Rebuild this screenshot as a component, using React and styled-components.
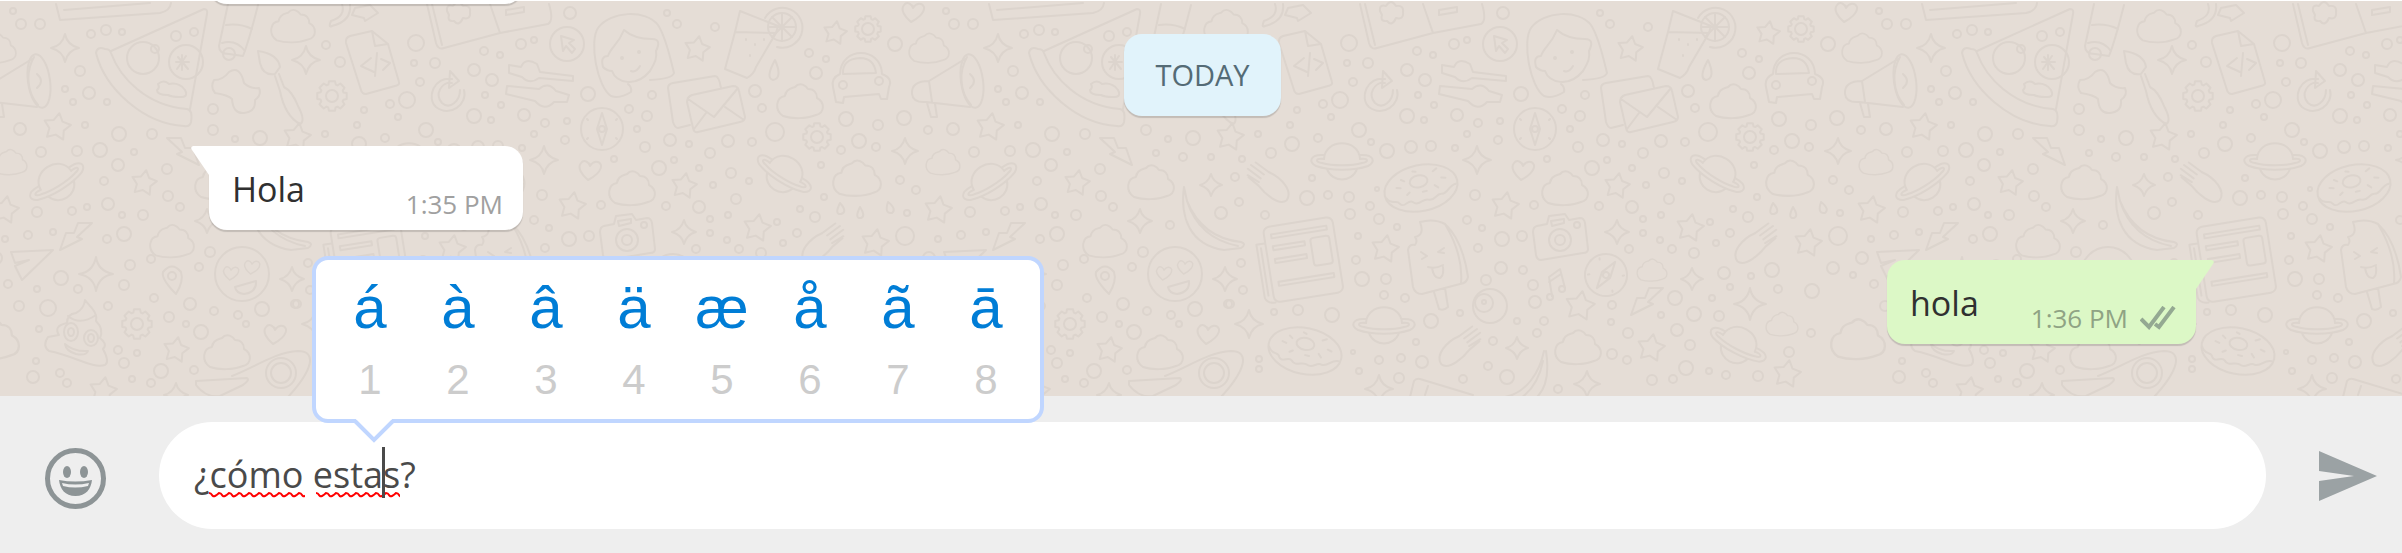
import React, { useState } from 'react';
import styled, { createGlobalStyle } from 'styled-components';

const GlobalStyle = createGlobalStyle`
  *, *::before, *::after { box-sizing: border-box; }
  body { margin: 0; background: #eee; font-family: "Open Sans", "Noto Sans", sans-serif; }
`;

const Page = styled.div`
  display: flex;
  flex-direction: column;
  min-height: 100vh;
`;

const Conversation = styled.main`
  position: relative;
  flex: 1;
  display: flex;
  flex-direction: column;
  padding: 0 206px 51px 209px;
  border-top: 1px solid #fff;
  background: #e5ddd6;
  overflow: hidden;
`;

const Wallpaper = styled.svg`
  position: absolute;
  inset: 0;
  width: 100%;
  height: 100%;
  fill: none;
  stroke: #dcd4cd;
  stroke-width: 2;
  stroke-linejoin: round;
  stroke-linecap: round;
`;

const Bubble = styled.article`
  position: relative;
  display: flex;
  justify-content: space-between;
  align-self: ${(p) => (p.$sent ? 'flex-end' : 'flex-start')};
  min-width: ${(p) => (p.$sent ? 309 : 314)}px;
  height: 84px;
  margin-top: 30px;
  padding: 0 20px 0 23px;
  border-radius: 18px;
  background: ${(p) => (p.$sent ? '#dcf8c6' : '#fff')};
  box-shadow: 0 2px 1px rgba(0, 0, 0, 0.15);
  ${(p) => (p.$sent ? 'border-top-right-radius: 0;' : 'border-top-left-radius: 0;')}
`;

const ScrolledBubble = styled(Bubble)`
  margin-top: -81px;
`;

const Tail = styled.svg`
  position: absolute;
  top: 0;
  width: 20px;
  height: 30px;
  fill: ${(p) => (p.$sent ? '#dcf8c6' : '#fff')};
  ${(p) => (p.$sent ? 'left: calc(100% - 1px);' : 'right: calc(100% - 1px);')}
`;

const MessageText = styled.p`
  margin: 0;
  padding-top: 20px;
  font-size: 34px;
  line-height: 46px;
  color: #303030;
`;

const Meta = styled.div`
  display: flex;
  align-items: center;
  gap: 12px;
  height: 76px;
  padding-top: 40px;
  font-size: 26px;
  line-height: 36px;
  color: ${(p) => (p.$sent ? '#8fa384' : '#a0a0a0')};
`;

const DateChip = styled.time`
  position: relative;
  align-self: center;
  display: flex;
  align-items: center;
  height: 82px;
  margin-top: 30px;
  padding: 0 31px 2px;
  border-radius: 18px;
  background: #e1f3fb;
  box-shadow: 0 2px 1px rgba(0, 0, 0, 0.15);
  color: #546b76;
  font-size: 29px;
`;

const Composer = styled.form`
  position: relative;
  display: flex;
  align-items: center;
  gap: 53px;
  padding: 26px 25px 24px 45px;
  background: #eee;
`;

const IconButton = styled.button`
  display: flex;
  padding: 0;
  border: 0;
  background: none;
  color: ${(p) => p.$color};
  cursor: pointer;
`;

const EmojiButton = styled(IconButton)`
  padding-top: 6px;
`;

const Field = styled.div`
  position: relative;
  flex: 1;
`;

const MessageInput = styled.input`
  display: block;
  width: 100%;
  height: 107px;
  padding: 0 36px 2px 35px;
  border: 0;
  border-radius: 54px;
  background: #fff;
  color: #4a4a4a;
  font: 36px "Open Sans", "Noto Sans", sans-serif;
  outline: none;
`;

const Caret = styled.span`
  position: absolute;
  left: 223px;
  top: 25px;
  width: 3px;
  height: 51px;
  background: #4a4a4a;
`;

const Squiggle = styled.svg`
  position: absolute;
  left: ${(p) => p.$left}px;
  top: 69px;
  width: ${(p) => p.$width}px;
  height: 7px;
  fill: none;
  stroke: #f00;
  stroke-width: 2;
`;

const AccentPopup = styled.div`
  position: absolute;
  left: 312px;
  bottom: 130px;
  display: flex;
  height: 167px;
  padding: 0 10px;
  border: 4px solid #c0d6ff;
  border-radius: 16px;
  background: #fff;
  font-family: "Liberation Sans", Arial, sans-serif;
`;

const AccentKey = styled.button`
  display: flex;
  flex-direction: column;
  align-items: center;
  width: 88px;
  padding: 14px 0 0;
  border: 0;
  background: none;
  font-family: inherit;
  cursor: pointer;
`;

const AccentLetter = styled.span`
  color: #007dd6;
  font-size: 60px;
  line-height: 68px;
`;

const AccentNumber = styled.span`
  color: #ccc;
  font-size: 42px;
  line-height: 76px;
`;

const Pointer = styled.svg`
  position: absolute;
  left: 36px;
  top: 158px;
  width: 44px;
  height: 25px;
`;

/* Wallpaper: one 933px wide run of doodles, repeated along the window. */
const TILE = 933;

const DOTS = [
  [13, 10, 3], [21, 23, 5], [40, 23, 5], [91, 33, 4], [106, 29, 5], [122, 31, 3], [176, 35, 5], [194, 31, 4],
  [80, 70, 5], [65, 88, 3], [89, 92, 6], [73, 101, 3], [107, 101, 3], [20, 128, 6], [85, 124, 3], [119, 133, 7],
  [152, 133, 5], [213, 108, 5], [213, 129, 5], [235, 138, 3], [260, 137, 7], [41, 151, 5], [77, 150, 5],
  [100, 149, 7], [134, 151, 3], [118, 164, 6], [167, 168, 5], [104, 180, 4], [168, 195, 5], [108, 203, 6],
  [37, 211, 5], [72, 210, 4], [87, 206, 3], [122, 214, 3], [143, 214, 5], [180, 206, 4], [223, 152, 3],
  [250, 156, 4], [278, 156, 3], [309, 158, 3], [302, 176, 4], [306, 201, 4], [288, 212, 6], [237, 224, 4],
  [332, 214, 4], [5, 238, 3], [28, 234, 4], [53, 231, 3], [107, 238, 4], [124, 233, 7], [210, 251, 5],
  [326, 44, 4], [340, 61, 5], [416, 42, 8], [414, 62, 3], [435, 62, 5], [474, 69, 6], [420, 81, 4], [492, 79, 6],
  [407, 99, 8], [390, 103, 4], [364, 109, 3], [398, 116, 3], [485, 94, 3], [501, 104, 3], [474, 115, 7],
  [491, 119, 3], [524, 114, 6], [357, 124, 3], [426, 129, 7], [325, 133, 3], [359, 143, 7], [385, 137, 4],
  [338, 152, 5], [438, 141, 3], [454, 150, 7], [478, 146, 6], [498, 145, 5], [522, 147, 3], [379, 177, 3],
  [374, 197, 7], [395, 194, 4], [416, 196, 5], [444, 188, 2], [417, 213, 5], [437, 205, 4], [446, 218, 5],
  [464, 226, 3], [425, 235, 3], [423, 259, 4], [429, 278, 7], [453, 278, 5], [451, 294, 4], [472, 297, 4],
  [365, 309, 5], [341, 311, 3], [399, 314, 7], [310, 289, 4], [297, 303, 4], [420, 351, 2], [446, 359, 4],
  [326, 358, 3], [326, 368, 3], [426, 370, 3], [468, 357, 4], [489, 361, 6], [466, 377, 5], [570, 12, 6],
  [521, 43, 5], [534, 39, 3], [484, 50, 4], [500, 54, 3], [588, 93, 7], [545, 122, 4], [567, 120, 3],
  [534, 133, 3], [565, 139, 4], [677, 23, 4], [715, 26, 4], [667, 12, 3], [652, 94, 4], [629, 108, 4],
  [647, 115, 5], [637, 128, 3], [755, 90, 6], [762, 107, 4], [645, 146, 5], [670, 139, 6], [689, 143, 3],
  [710, 152, 5], [728, 140, 6], [752, 141, 4], [775, 131, 9], [809, 52, 4], [826, 58, 3], [816, 72, 6],
  [846, 118, 7], [859, 140, 7], [841, 149, 4], [614, 158, 3], [659, 167, 7], [674, 159, 3], [699, 167, 3],
  [731, 172, 5], [749, 180, 3], [713, 184, 3], [542, 194, 5], [601, 204, 4], [666, 205, 4], [699, 206, 6],
  [736, 198, 5], [728, 214, 3], [710, 218, 3], [710, 232, 3], [727, 239, 3], [739, 248, 4], [761, 252, 5],
  [696, 248, 4], [783, 242, 3], [797, 232, 4], [777, 221, 3], [800, 208, 3], [815, 216, 5], [824, 196, 3],
  [821, 164, 3], [534, 219, 4], [549, 227, 3], [569, 238, 7], [589, 235, 5], [545, 247, 4], [568, 267, 6],
  [590, 269, 4], [553, 279, 5], [600, 284, 5], [602, 301, 6], [498, 320, 7], [527, 312, 3], [483, 341, 3],
  [560, 340, 4], [584, 320, 3], [611, 320, 4], [604, 332, 4], [679, 304, 4], [678, 321, 3], [695, 332, 5],
  [744, 329, 6], [728, 314, 3], [742, 297, 7], [761, 313, 7], [786, 315, 5], [779, 297, 3], [791, 272, 6],
  [797, 286, 3], [818, 275, 3], [839, 269, 7], [845, 288, 4], [679, 353, 5], [694, 359, 4], [757, 344, 5],
  [753, 367, 7], [776, 370, 3], [740, 378, 4], [719, 379, 5], [793, 374, 4], [825, 375, 5], [856, 351, 5],
  [555, 365, 4], [574, 376, 7], [530, 378, 4], [625, 388, 4], [895, 43, 7], [904, 117, 7], [878, 124, 5],
  [928, 129, 4], [876, 146, 4], [900, 179, 4], [916, 189, 4], [907, 212, 3], [905, 235, 9], [929, 257, 6],
  [900, 267, 6], [920, 274, 3], [879, 290, 7], [8, 283, 4], [878, 332, 4], [61, 277, 7], [37, 288, 3],
  [78, 288, 4], [48, 307, 8], [19, 305, 5], [108, 305, 4], [130, 264, 5], [151, 258, 4], [124, 284, 5],
  [154, 297, 4], [169, 316, 5], [186, 323, 3], [190, 303, 6], [199, 266, 4], [214, 310, 4], [238, 314, 4],
  [246, 323, 3], [201, 331, 7], [262, 308, 7], [295, 303, 4], [39, 328, 3], [118, 349, 4], [137, 352, 3],
  [124, 362, 5], [33, 376, 6], [36, 360, 3], [60, 372, 4], [67, 382, 4], [132, 378, 3], [151, 382, 4],
  [161, 370, 7], [194, 369, 4], [308, 262, 4],
];

const STARS = [
  [57, 126, 14], [144, 182, 13], [5, 209, 14], [297, 136, 14], [452, 248, 14], [572, 205, 14], [697, 48, 13],
  [684, 185, 13], [757, 227, 14], [835, 32, 12], [647, 305, 15], [718, 347, 14], [854, 373, 14], [875, 242, 14],
  [176, 349, 13], [103, 390, 14],
];
const SPARKS = [
  [65, 47, 14], [306, 59, 14], [278, 184, 11], [207, 220, 12], [905, 150, 13], [544, 159, 14], [684, 231, 12],
  [292, 278, 12], [316, 323, 14], [759, 278, 11], [584, 347, 11], [817, 303, 16], [446, 388, 14], [654, 383, 13],
  [96, 273, 17], [176, 394, 12],
];
const CLOUDS = [
  [293, 25, 22], [218, 181, 23], [172, 240, 22], [-4, 47, 20], [10, 161, 17], [-8, 338, 27], [632, 187, 23],
  [800, 100, 23], [857, 177, 24], [719, 269, 15], [645, 346, 23], [849, 323, 16], [227, 351, 23],
];
const PLANETS = [[409, 160, 0], [451, 324, 0], [784, 173, 32], [805, 344, 28], [57, 181, -32]];
const GEARS = [[332, 95, 15], [817, 136, 14], [868, 28, 13], [137, 323, 15]];
const HEARTS = [[913, 11, 10], [590, 169, 11], [275, 333, 11]];
const BOLTS = [[184, 150, 20], [75, 235, -20], [713, 300, -20]];
const HANDS = [[336, 183, 40], [822, 244, -40], [526, 347, -40]];

const polar = (r, a) => `${(r * Math.cos(a)).toFixed(1)},${(r * Math.sin(a)).toFixed(1)}`;
const starPath = (r) =>
  'M' + Array.from({ length: 10 }, (_, i) => polar(i % 2 ? r * 0.55 : r, (i * Math.PI) / 5 - 1.4)).join('L') + 'Z';
const gearPath = (r) =>
  'M' +
  Array.from({ length: 8 }, (_, i) => {
    const a = (i * Math.PI) / 4;
    return [polar(r, a - 0.2), polar(r, a + 0.2), polar(r * 0.8, a + 0.32), polar(r * 0.8, a + 0.48)].join('L');
  }).join('L') +
  'Z';
const sparkPath = (r) => `M0,${-r}Q2,-3 ${r},0Q3,2 0,${r}Q-2,3 ${-r},0Q-3,-2 0,${-r}Z`;
const CLOUD = 'M-17,15C-26,9 -24,-4 -15,-5C-14,-13 -7,-13 -5,-14C0,-20 6,-15 8,-12C15,-12 17,-7 17,-3C25,1 25,12 16,14C6,18 -8,18 -17,15Z';
const HEART = 'M-2,10C-8,5 -13,-2 -9,-7C-6,-11 -1,-8 0,-4C3,-9 9,-10 11,-5C12,1 4,7 -2,10Z';

const at = (x, y, r = 0) => `translate(${x} ${y}) rotate(${r})`;

const Donut = ({ x, y, r }) => (
  <g transform={at(x, y, r)}>
    <ellipse rx="37" ry="23" />
    <path d="M-36,3C-32,11 -26,6 -24,11C-20,17 -15,8 -11,12C-6,18 0,10 5,13C11,16 14,8 19,10C26,11 27,3 35,3" />
    <ellipse cx="-1" cy="-7" rx="9" ry="6" />
    <path d="M-24,-5l4,1M-18,-12l3,2M15,-14l4,-2M22,-6l4,1M14,0l3,3M-12,2l-3,2M1,4h4M-5,-18l3,1" />
  </g>
);

const Compass = ({ x, y, r }) => (
  <g transform={at(x, y, r)}>
    <circle r="21" />
    <path d="M0,-16L5,0L0,16L-5,0Z" />
    <circle r="3" />
    <path d="M14,-9l1,-1M-14,-9l-1,-1M14,9l1,1M-14,9l-1,1" />
  </g>
);

const Doodles = () => (
  <g id="doodles">
    {DOTS.map(([x, y, r]) => <circle key={`${x}-${y}`} cx={x} cy={y} r={r} />)}
    {STARS.map(([x, y, r]) => <path key={`${x}-${y}`} transform={at(x, y)} d={starPath(r)} />)}
    {SPARKS.map(([x, y, r]) => <path key={`${x}-${y}`} transform={at(x, y)} d={sparkPath(r)} />)}
    {CLOUDS.map(([x, y, r]) => (
      <path key={`${x}-${y}`} transform={`translate(${x} ${y}) scale(${r / 23})`} d={CLOUD} />
    ))}
    {GEARS.map(([x, y, r]) => (
      <g key={`${x}-${y}`} transform={at(x, y)}><path d={gearPath(r)} /><circle r="6" /></g>
    ))}
    {HEARTS.map(([x, y]) => <path key={`${x}-${y}`} transform={at(x, y)} d={HEART} />)}
    {PLANETS.map(([x, y, r]) => (
      <g key={`${x}-${y}`} transform={at(x, y, r)}>
        <path d="M-18,-2C-17,-23 17,-23 18,-2M-15,8C-10,22 10,22 15,8" />
        <path d="M-18,-6C-32,-7 -34,1 -26,5C-12,10 12,10 26,5C34,1 32,-7 18,-6M-18,-2C-27,-3 -27,1 -20,2C-10,5 10,5 20,2C27,1 27,-3 18,-2" />
      </g>
    ))}
    {BOLTS.map(([x, y, s]) => (
      <path key={`${x}-${y}`} transform={`translate(${x} ${y}) scale(${s / 20} 1)`} d="M-17,-13H-3L1,-3L9,-3L15,14L-7,3L-2,1Z" />
    ))}
    {HANDS.map(([x, y, r]) => (
      <path key={`${x}-${y}`} transform={at(x, y, r)} d={r > 0
        ? 'M-8,-9C6,-13 23,-10 24,1C22,11 2,10 -7,8L-20,8M-8,-9L-24,-8M-10,-4L-26,-3M-10,1L-26,2M-9,5L-22,7'
        : 'M8,-9C-6,-13 -23,-10 -24,1C-22,11 -2,10 7,8L20,8M8,-9L24,-8M10,-4L26,-3M10,1L26,2M9,5L22,7'} />
    ))}
    <Donut x={488} y={187} r={-12} />
    <Donut x={372} y={350} r={12} />
    <Compass x={602} y={128} r={0} />
    <Compass x={673} y={274} r={35} />

    {/* pizza slice */}
    <path d="M111,50L204,8Q208,8 207,13L190,108" />
    <path d="M96,52Q97,45 105,48Q110,48 111,52C120,77 147,105 187,108Q193,109 191,121Q190,126 184,125C144,123 105,88 96,52Z" />
    <circle cx="143" cy="57" r="16" /><circle cx="155" cy="48" r="4" /><circle cx="186" cy="61" r="17" />
    <path d="M182,54v15M176,61h13M177,68l9,-13M178,56l10,12M158,83q6,-5 11,0q10,-2 16,6q4,8 -6,7q-7,0 -11,-2q-11,0 -11,-5q3,-2 1,-6Z" />
    <path d="M56,3L60,19L160,12Q170,10 171,2M64,9L150,2" />

    {/* megaphone */}
    <ellipse cx="39" cy="80" rx="11" ry="27" transform="rotate(-8 39 80)" />
    <path d="M34,56C26,70 26,90 38,104M32,58L-4,80Q-22,80 -21,93Q-20,102 -7,101L37,106M-4,80L-1,101M-6,102L-2,116H4L2,103M37,73q8,7 0,14" />

    {/* tube, brush and blob */}
    <path d="M228,3L219,45Q219,53 229,53L243,55Q249,40 258,4M226,24Q240,22 252,28M222,42Q236,38 245,50" />
    <circle cx="229" cy="53" r="6" />
    <path d="M258,50Q278,53 280,66L275,73Q263,75 260,62ZM275,75L280,90Q285,115 300,123Q306,120 298,105Q292,90 284,86L279,73" />
    <path d="M214,79Q223,79 229,71Q240,64 244,82Q250,88 259,87Q262,94 255,99Q256,111 244,112Q233,113 232,98Q228,94 215,92Q210,86 214,79Z" />

    {/* code file, refresh, book */}
    <path d="M350,35L372,30L388,43L399,81Q400,84 395,85L366,93Q362,93 361,89L346,42Q345,37 350,35ZM372,30L375,45L388,43M371,57L361,65L374,71M377,52L375,75M381,58L390,62L383,69" />
    <path d="M452,78C434,75 426,97 436,106C450,117 468,103 464,89M452,82C442,80 434,93 442,102C450,109 460,100 460,89M450,70L459,80L449,87Z" />
    <path d="M427,3L436,42Q438,49 444,47L500,32M432,3L442,44M490,3L500,32L548,23Q554,20 549,3M506,9L524,6V11L506,14Z" />
    <path d="M447,10q-1,-7 6,-5q5,-8 10,0q8,-1 7,6q1,8 -7,6q-4,9 -9,3q-7,1 -5,-6ZM350,3Q352,20 332,25Q328,27 331,20Q346,15 342,3M352,14L364,17L365,20L378,12L370,4L355,7Z" />
    <circle cx="567" cy="43" r="17" />
    <path d="M561,35L574,39L569,42L575,48L572,52L566,45L563,50Z" />
    <path d="M509,64L521,66Q525,56 537,63L540,71L573,75V80L539,77Q530,84 522,76L509,72ZM507,85L539,88Q548,80 556,90L569,94L567,101L554,101Q545,111 535,100L506,93Z" />

    {/* girl */}
    <path d="M611,95C597,86 589,40 598,27C610,10 646,8 658,24C666,36 671,60 674,72Q672,78 650,79M611,95Q620,98 631,91Q632,86 628,83M624,29C618,44 611,46 608,55Q600,55 603,66Q607,70 612,70C616,82 636,87 650,70C656,60 657,56 656,50Q662,38 652,38Q634,38 624,29M631,70Q636,72 640,65" />
    <circle cx="622" cy="57" r="1" /><circle cx="639" cy="51" r="1" />

    {/* envelopes */}
    <path d="M690,124L678,127Q675,127 673,121L668,87Q668,83 673,82L715,75Q719,75 721,87M692,94L733,85Q738,85 739,90L745,116Q745,120 740,121L698,131Q694,132 693,127L687,101Q687,96 692,94ZM688,98L714,116L738,87M694,128L706,112M725,106L744,119" />

    {/* glass with orange */}
    <path d="M735,31L740,10L778,25L776,32ZM735,31L725,68L747,77Q754,73 756,66L776,32" />
    <path d="M765,17A20,20 0 1 1 777,46" /><circle cx="782" cy="26" r="14" />
    <path d="M782,12V40M769,26H796M772,16L792,36M792,16L772,36" />
    <path d="M746,38v1M755,43v1M764,38v1M750,54v1M775,59Q783,77 773,79Q765,77 775,59Z" />

    {/* car */}
    <path d="M836,101L833,86Q831,77 840,73C841,45 881,45 882,73Q893,77 889,86L887,98H881L879,93L844,96L843,102ZM843,73Q842,58 860,57Q874,57 876,72Z" />
    <circle cx="843" cy="84" r="4" /><circle cx="879" cy="80" r="4" />

    {/* bananas */}
    <path d="M251,186C247,215 256,244 291,249L308,247Q314,243 308,241C280,238 263,222 254,200ZM254,200C262,225 280,240 305,245" />
    <path d="M611,350C607,370 594,392 572,396M613,350C617,376 611,390 603,397M610,360C606,380 598,390 588,397" />

    {/* newspaper and ice lolly */}
    <g transform={at(368, 257, -9)}>
      <rect x="-33" y="-36" width="70" height="76" rx="6" />
      <path d="M-34,-20H-42V34Q-40,40 -32,40M-38,-16V32" />
      <rect x="-26" y="-28" width="56" height="4" /><rect x="-26" y="-16" width="32" height="4" />
      <rect x="-26" y="-3" width="32" height="4" /><rect x="12" y="-18" width="19" height="28" rx="3" />
      <rect x="-26" y="20" width="56" height="4" />
    </g>
    <path d="M487,221Q501,217 512,223C526,236 532,255 535,276Q534,282 527,283L489,293Q482,293 480,286L475,249Q476,243 482,244Q485,240 482,236Q492,234 487,221ZM512,223C522,240 530,260 528,282M488,251l6,4l-5,3M511,247l-6,4l6,1M495,266q8,2 15,-2M499,267q2,11 8,10q4,-2 3,-11M501,291L506,308Q511,310 515,306L512,287" />

    {/* camera, eye and notes */}
    <path d="M604,225L614,223L616,215L632,213L636,219L647,217Q651,217 652,222L655,248Q655,252 650,252L608,259Q604,259 603,254L600,231Q600,226 604,225ZM618,220L631,218V222L619,225Z" />
    <circle cx="627" cy="239" r="11" /><circle cx="627" cy="239" r="5" /><circle cx="644" cy="224" r="3" />
    <circle cx="557" cy="305" r="17" /><circle cx="551" cy="302" r="9" /><circle cx="551" cy="301" r="2" />
    <path d="M619,295L616,276L627,268L632,287M616,281L628,273" /><circle cx="617" cy="296" r="3" /><circle cx="629" cy="288" r="3" />
    <path d="M840,202q8,9 1,11q-7,1 -1,-11ZM860,206q6,9 1,11q-7,1 -1,-11ZM888,201q9,7 4,11q-8,1 -4,-11Z" />

    {/* smiling face, pin and paper plane */}
    <circle cx="242" cy="273" r="27" />
    <path transform="translate(231 272) scale(.7)" d={HEART} /><path transform="translate(252 266) scale(.7)" d={HEART} />
    <path d="M235,286L256,280Q257,291 244,293Q236,292 235,286Z" />
    <path d="M176,293Q161,278 163,271Q172,260 181,271Q184,280 176,293Z" /><circle cx="172" cy="275" r="4" />
    <path d="M11,251L53,249L22,279L15,265L29,259L15,262Z" />

    {/* soft-serve pile */}
    <path d="M85,299C90,306 98,311 96,320Q104,328 100,337Q108,343 103,348Q110,361 105,364C92,368 75,355 49,350Q42,345 48,336L59,334Q53,325 67,322Q67,313 76,312Q84,308 85,299ZM68,315Q80,325 96,314M65,343Q74,351 88,350Q86,355 76,353Q66,350 65,343Z" />
    <ellipse cx="71" cy="331" rx="7" ry="9" /><ellipse cx="91" cy="337" rx="7" ry="8" />
    <ellipse cx="71" cy="331" rx="3" ry="4" /><ellipse cx="91" cy="337" rx="3" ry="4" />

    {/* avocado and hat */}
    <path d="M232,375C252,368 275,351 298,350C318,350 312,370 288,396" />
    <circle cx="281" cy="372" r="15" /><circle cx="281" cy="372" r="10" />
    <path d="M196,380L247,377Q250,379 243,384L220,395Q206,397 196,384Z" />
    <path d="M477,396L481,380Q483,377 487,378L540,394M495,385l-3,9" />
  </g>
);

const ACCENTS = ['á', 'à', 'â', 'ä', 'æ', 'å', 'ã', 'ā'];

const wave = (width) => {
  let d = 'M0,2';
  for (let x = 0; x < width; x += 10) d += `q2,0 3,2t3,1t4,-3`;
  return d;
};

const Ticks = () => (
  <svg width="36" height="24" viewBox="0 0 36 24" fill="none" stroke="#94a992" strokeWidth="4" aria-label="Delivered" role="img">
    <path d="M1,13L9,21L24,1M15,18L19,21L34,1" />
  </svg>
);

const Smiley = () => (
  <svg width="61" height="61" viewBox="0 0 61 61" aria-hidden="true">
    <circle cx="30.500" cy="30.500" r="28" fill="none" stroke="currentColor" strokeWidth="5" />
    <ellipse cx="22" cy="24" rx="4" ry="6" fill="currentColor" />
    <ellipse cx="39" cy="24" rx="4" ry="6" fill="currentColor" />
    <path d="M14,32Q30,35 47,32C46,41 41,48 30.500,48S15,41 14,32Z" fill="currentColor" />
    <path d="M17,35Q30,38 44,35L43,38Q30,41 18,38Z" fill="#eee" />
  </svg>
);

const SendIcon = () => (
  <svg width="58" height="50" viewBox="0 0 58 50" fill="currentColor" aria-hidden="true">
    <path d="M0,0L58,25L0,50V30L35,25L0,20Z" />
  </svg>
);

const Message = ({ text, time, sent }) => (
  <Bubble $sent={sent}>
    <Tail $sent={sent} viewBox="0 0 20 30" aria-hidden="true">
      <path d={sent ? 'M0,0H17Q20,1 18,4L1,29H0Z' : 'M20,0H3Q0,1 2,4L19,29H20Z'} />
    </Tail>
    <MessageText>{text}</MessageText>
    <Meta $sent={sent}>
      <time>{time}</time>
      {sent && <Ticks />}
    </Meta>
  </Bubble>
);

export default function App() {
  const [draft, setDraft] = useState('¿cómo estas?');

  return (
    <Page>
      <GlobalStyle />
      <Conversation>
        <Wallpaper aria-hidden="true">
          <Doodles />
          {[-1, 1, 2, 3, 4].map((n) => <use key={n} href="#doodles" x={n * TILE} />)}
        </Wallpaper>
        <ScrolledBubble />
        <DateChip>TODAY</DateChip>
        <Message text="Hola" time="1:35 PM" />
        <Message text="hola" time="1:36 PM" sent />
      </Conversation>
      <Composer onSubmit={(e) => e.preventDefault()}>
        <EmojiButton type="button" aria-label="Emoji" $color="#8d9496">
          <Smiley />
        </EmojiButton>
        <Field>
          <MessageInput
            aria-label="Type a message"
            spellCheck={false}
            value={draft}
            onChange={(e) => setDraft(e.target.value)}
          />
          <Squiggle $left={50} $width={96} aria-hidden="true"><path d={wave(96)} /></Squiggle>
          <Squiggle $left={157} $width={84} aria-hidden="true"><path d={wave(84)} /></Squiggle>
          <Caret />
        </Field>
        <IconButton type="submit" aria-label="Send" $color="#9ba2a4">
          <SendIcon />
        </IconButton>
        <AccentPopup>
          {ACCENTS.map((letter, i) => (
            <AccentKey type="button" key={letter}>
              <AccentLetter>{letter}</AccentLetter>
              <AccentNumber>{i + 1}</AccentNumber>
            </AccentKey>
          ))}
          <Pointer viewBox="0 0 44 25" aria-hidden="true">
            <path d="M4,0V3L22,21L40,3V0Z" fill="#fff" />
            <path d="M3,3L22,22L41,3" fill="none" stroke="#c0d6ff" strokeWidth="4" />
          </Pointer>
        </AccentPopup>
      </Composer>
    </Page>
  );
}
